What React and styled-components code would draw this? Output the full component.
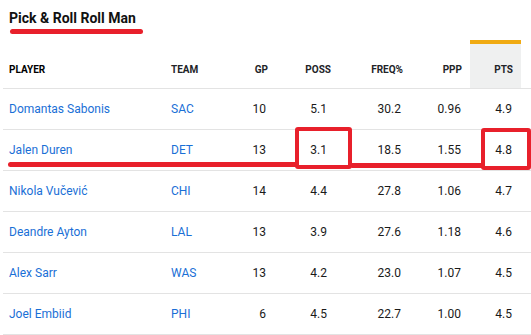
import React from "react";
import styled, { createGlobalStyle } from "styled-components";

const GlobalStyle = createGlobalStyle`
  html, body { margin: 0; padding: 0; background: #ffffff; }
  body { font-family: Roboto, "Liberation Sans", Arial, sans-serif; }
`;

const Page = styled.div`
  position: relative;
  width: 531px;
  height: 335px;
  overflow: hidden;
  background: #ffffff;
`;

const Title = styled.h2`
  margin: 0;
  padding: 9px 0 0 9px;
  font-size: 14px;
  line-height: 18px;
  font-weight: 700;
  color: #111111;
`;

const Table = styled.div`
  margin: 13px 0 0 3px;
  width: 540px;
`;

const COLS = "162px 65px 46px 63px 72px 59px 51px 1fr";

const HeaderRow = styled.div`
  display: grid;
  grid-template-columns: ${COLS};
  height: 49px;
  border-bottom: 1px solid #e3e3e3;
  box-sizing: border-box;
`;

const HeaderCell = styled.div`
  display: flex;
  align-items: flex-end;
  justify-content: ${(p) => (p.$left ? "flex-start" : "flex-end")};
  padding: 0 ${(p) => (p.$left ? "0" : "8px")} 12px ${(p) => (p.$left ? "6px" : "0")};
  font-size: 10px;
  line-height: 12px;
  font-weight: 700;
  color: ${(p) => (p.$dark ? "#000000" : "#222428")};
  background: ${(p) => (p.$active ? "#eff0f0" : "transparent")};
  border-top: 4px solid ${(p) => (p.$active ? "#f0aa12" : "transparent")};
  box-sizing: border-box;
`;

const Row = styled.div`
  display: grid;
  grid-template-columns: ${COLS};
  height: 41px;
  border-bottom: 1px solid #e3e3e3;
  box-sizing: border-box;
`;

const Cell = styled.div`
  display: flex;
  align-items: center;
  justify-content: ${(p) => (p.$left ? "flex-start" : "flex-end")};
  padding: ${(p) => (p.$left ? "0 0 0 6px" : `0 ${p.$pr || 10}px 0 0`)};
  font-size: 12px;
  color: ${(p) => (p.$link ? "#1a6fd6" : "#1a1a1a")};
  white-space: nowrap;
`;

const Mark = styled.div`
  position: absolute;
  background: #e8202b;
  border-radius: 3px;
`;

const MarkBox = styled.div`
  position: absolute;
  border: 4px solid #e8202b;
  border-radius: 3px;
  box-sizing: border-box;
`;

const rows = [
  ["Domantas Sabonis", "SAC", "10", "5.1", "30.2", "0.96", "4.9"],
  ["Jalen Duren", "DET", "13", "3.1", "18.5", "1.55", "4.8"],
  ["Nikola Vučević", "CHI", "14", "4.4", "27.8", "1.06", "4.7"],
  ["Deandre Ayton", "LAL", "13", "3.9", "27.6", "1.18", "4.6"],
  ["Alex Sarr", "WAS", "13", "4.2", "23.0", "1.07", "4.5"],
  ["Joel Embiid", "PHI", "6", "4.5", "22.7", "1.00", "4.5"],
];

export default function App() {
  return (
    <Page>
      <GlobalStyle />
      <Title>Pick &amp; Roll Roll Man</Title>
      <Table>
        <HeaderRow>
          <HeaderCell $left $dark>PLAYER</HeaderCell>
          <HeaderCell $left>TEAM</HeaderCell>
          <HeaderCell>GP</HeaderCell>
          <HeaderCell>POSS</HeaderCell>
          <HeaderCell>FREQ%</HeaderCell>
          <HeaderCell>PPP</HeaderCell>
          <HeaderCell $active>PTS</HeaderCell>
          <HeaderCell />
        </HeaderRow>
        {rows.map((r) => (
          <Row key={r[0]}>
            <Cell $left $link>{r[0]}</Cell>
            <Cell $left $link>{r[1]}</Cell>
            <Cell>{r[2]}</Cell>
            <Cell $pr={12}>{r[3]}</Cell>
            <Cell>{r[4]}</Cell>
            <Cell $pr={9}>{r[5]}</Cell>
            <Cell $pr={9}>{r[6]}</Cell>
            <Cell />
          </Row>
        ))}
      </Table>
      <Mark style={{ left: 10, top: 29, width: 133, height: 5 }} />
      <Mark style={{ left: 8, top: 162, width: 290, height: 5 }} />
      <Mark style={{ left: 350, top: 163, width: 134, height: 5 }} />
      <MarkBox style={{ left: 295, top: 127, width: 57, height: 42 }} />
      <MarkBox style={{ left: 481, top: 128, width: 50, height: 42 }} />
    </Page>
  );
}
